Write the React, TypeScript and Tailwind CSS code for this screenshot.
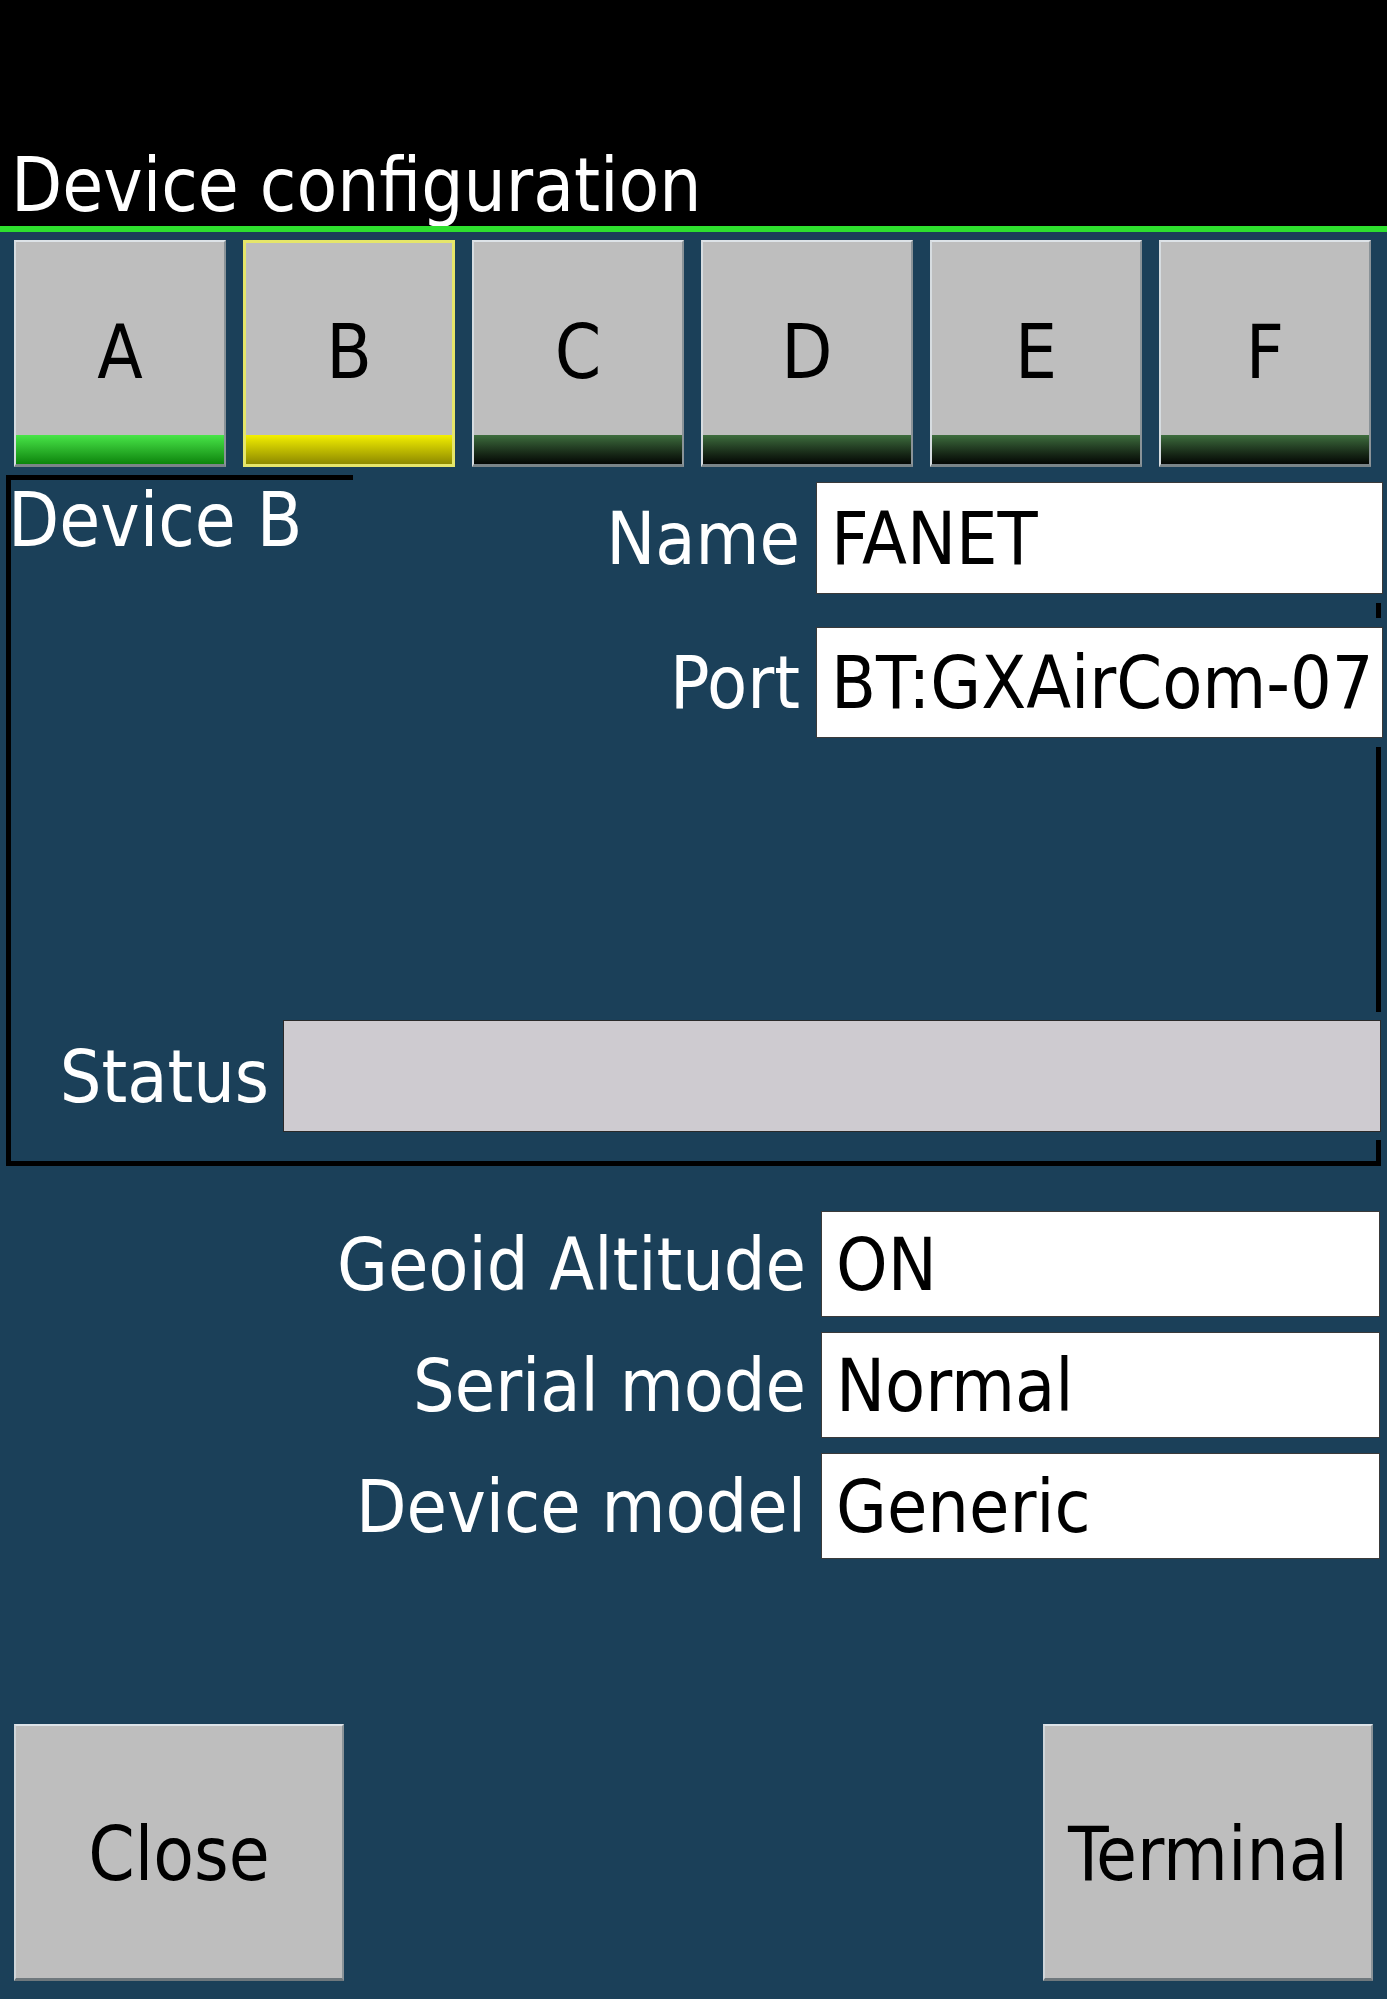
import React from "react";

const FONT = "font-['DejaVu_Sans_Condensed','DejaVu_Sans',sans-serif] font-stretch-condensed";

function Tab({ letter, bar, selected }: { letter: string; bar: string; selected?: boolean }) {
  return (
    <div
      className={
        "relative flex h-[227px] w-[212px] shrink-0 flex-col bg-[#bebebe] " +
        (selected
          ? "border-[3px] border-[#e6e66a]"
          : "border-t-2 border-l-2 border-r-2 border-b-[3px] border-t-[#dde3e8] border-l-[#d6dce0] border-r-[#8a9398] border-b-[#7a8488]")
      }
    >
      <div className="flex flex-1 items-center justify-center pt-[26px] text-[74px] leading-none text-black">
        {letter}
      </div>
      <div className={"h-[29px] w-full " + bar} />
    </div>
  );
}

function Field({ label, value }: { label: string; value: string }) {
  return (
    <div className="flex items-center">
      <div className="w-[821px] shrink-0 pr-[15px] text-right text-[73px] leading-none text-white">{label}</div>
      <div className="flex h-[106px] w-[559px] items-center overflow-hidden whitespace-nowrap border border-[#3a3a3a] bg-white pl-[14px] text-[73px] leading-none text-black">
        {value}
      </div>
    </div>
  );
}

function Button({ label }: { label: string }) {
  return (
    <div className="flex h-[257px] w-[330px] items-center justify-center border-t-2 border-l-2 border-r-2 border-b-[3px] border-t-[#dde3e8] border-l-[#cfd5d9] border-r-[#8a9398] border-b-[#6f787d] bg-[#bebebe] pt-[4px] text-[74px] leading-none text-black">
      {label}
    </div>
  );
}

export default function App() {
  return (
    <div className={"flex h-[1999px] w-[1387px] flex-col overflow-hidden bg-[#1b4059] " + FONT}>
      {/* header */}
      <div className="flex h-[226px] items-end bg-black pb-[4px] pl-[11px]">
        <div className="text-[74px] leading-none text-white">Device configuration</div>
      </div>
      <div className="h-[6px] bg-[#2ee02e]" />

      {/* tabs */}
      <div className="flex gap-[17px] pl-[14px] pt-[8px]">
        <Tab letter="A" bar="bg-gradient-to-b from-[#48e648] to-[#0a850a]" />
        <Tab letter="B" bar="bg-gradient-to-b from-[#f4f000] to-[#8e8a00]" selected />
        <Tab letter="C" bar="bg-gradient-to-b from-[#3e6e3e] to-[#050805]" />
        <Tab letter="D" bar="bg-gradient-to-b from-[#3e6e3e] to-[#050805]" />
        <Tab letter="E" bar="bg-gradient-to-b from-[#3e6e3e] to-[#050805]" />
        <Tab letter="F" bar="bg-gradient-to-b from-[#3e6e3e] to-[#050805]" />
      </div>

      {/* group box */}
      <div className="ml-[6px] mt-[8px] flex h-[691px] w-[1375px] flex-col border-[5px] border-black">
        <div className="-mr-[5px] -mt-[5px] flex">
          <div className="-ml-[3px] w-[345px] shrink-0 pt-[8px] text-[74px] leading-none text-white">Device B</div>
          <div className="flex flex-1 flex-col">
            <div className="flex h-[128px] items-start bg-[#1b4059] pt-[7px]">
              <div className="flex h-[112px] w-[463px] items-center justify-end pr-[16px] text-[73px] leading-none text-white">Name</div>
              <div className="flex h-[112px] flex-1 items-center border border-[#3a3a3a] bg-white pl-[14px] text-[73px] leading-none text-black">FANET</div>
            </div>
            <div className="h-[15px]" />
            <div className="flex h-[129px] items-start bg-[#1b4059] pt-[9px]">
              <div className="flex h-[111px] w-[463px] items-center justify-end pr-[16px] text-[73px] leading-none text-white">Port</div>
              <div className="flex h-[111px] flex-1 items-center border border-[#3a3a3a] bg-white pl-[14px] pr-[8px] text-[73px] leading-none text-black">
                <div className="flex-1 overflow-hidden whitespace-nowrap">BT:GXAirCom-07</div>
              </div>
            </div>
          </div>
        </div>
        <div className="-mr-[5px] mt-[265px] flex h-[128px] items-center bg-[#1b4059]">
          <div className="flex w-[272px] shrink-0 justify-end pr-[14px] text-[73px] leading-none text-white">Status</div>
          <div className="h-[112px] flex-1 border border-[#2a2a2a] bg-[#cecbd0]" />
        </div>
      </div>

      {/* lower fields */}
      <div className="mt-[45px] flex flex-col gap-[15px]">
        <Field label="Geoid Altitude" value="ON" />
        <Field label="Serial mode" value="Normal" />
        <Field label="Device model" value="Generic" />
      </div>

      {/* buttons */}
      <div className="mt-[165px] flex justify-between pl-[14px] pr-[14px]">
        <Button label="Close" />
        <Button label="Terminal" />
      </div>
    </div>
  );
}
